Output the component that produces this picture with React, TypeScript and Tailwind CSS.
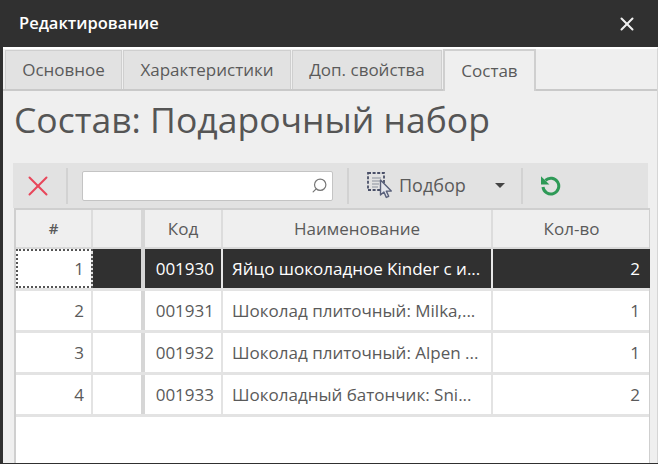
import { X, Search } from "lucide-react";

const rows = [
  { n: 1, code: "001930", name: "Яйцо шоколадное Kinder с и...", qty: 2 },
  { n: 2, code: "001931", name: "Шоколад плиточный: Milka,...", qty: 1 },
  { n: 3, code: "001932", name: "Шоколад плиточный: Alpen ...", qty: 1 },
  { n: 4, code: "001933", name: "Шоколадный батончик: Sni...", qty: 2 },
];

const cols = "grid grid-cols-[77px_48px_4px_78px_270px_157px]";

function PickIcon() {
  return (
    <svg width="26" height="27" viewBox="0 0 26 27" fill="none">
      <rect x="1" y="1" width="16" height="17" stroke="#4a5068" strokeWidth="1.8" strokeDasharray="3 1.6" />
      <path d="M5 6h9M5 9h9M5 12h7M5 15h6" stroke="#8a8f9c" strokeWidth="1.2" />
      <path d="M13.5 8v15l3.4-3 2.4 5.4 2.4-1.1-2.4-5.2h5z" fill="#e4e6ec" stroke="#59607a" strokeWidth="1.4" strokeLinejoin="round" />
    </svg>
  );
}

function RefreshIcon() {
  return (
    <svg width="21" height="21" viewBox="0 0 21 21" fill="none" className="ml-[17px]">
      <path d="M5.4 5.4A7.9 7.9 0 1 1 3 12" stroke="#2e9a57" strokeWidth="3" />
      <path d="M1 1.2v8.4h8.4z" fill="#2e9a57" />
    </svg>
  );
}

export default function App() {
  return (
    <div className="w-[658px] h-[464px] overflow-hidden bg-[#303030] pl-[3px] pb-px font-['Open_Sans',sans-serif] text-[#5a5a5a]">
      <div className="h-[47px] -ml-[3px] flex items-center justify-between pl-[19px] pr-[20px] text-white">
        <span className="text-[16.5px] font-semibold">Редактирование</span>
        <X size={22} strokeWidth={2.2} className="text-[#f0f0f0]" />
      </div>
      <div className="h-[416px] bg-[#efefef] flex flex-col border-t-[2px] border-r border-t-white border-r-[#d5d5d5]">
        <div className="h-[42px] flex items-end pl-[2px] gap-px border-b-[2px] border-[#c9c9c9] text-[17px]">
          <div className="w-[117px] h-[39px] bg-[#e2e2e2] border border-b-0 border-[#cfcfcf] flex items-center justify-center">Основное</div>
          <div className="w-[168px] h-[39px] bg-[#e2e2e2] border border-b-0 border-[#cfcfcf] flex items-center justify-center">Характеристики</div>
          <div className="w-[150px] h-[39px] bg-[#e2e2e2] border border-b-0 border-[#cfcfcf] flex items-center justify-center">Доп. свойства</div>
          <div className="w-[93px] h-[42px] -mb-[2px] bg-[#efefef] border-2 border-b-0 border-[#cfcfcf] flex items-center justify-center">Состав</div>
        </div>
        <h1 className="h-[72px] pl-[11px] pt-[4px] text-[35.5px] leading-[48px] text-[#555]">Состав: Подарочный набор</h1>
        <div className="ml-[10px] w-[635px] h-[45px] shrink-0 bg-[#e2e2e2] flex items-center">
          <div className="w-[55px] h-[36px] pr-[3px] flex items-center justify-center border-r-2 border-[#d2d2d2]">
            <X size={34} strokeWidth={1.4} className="shrink-0 text-[#e8465a]" />
          </div>
          <div className="ml-[14px] w-[251px] h-[30px] bg-white border border-[#c4c4c4] rounded-[2px] flex items-center justify-end pr-[4px]">
            <Search size={17} strokeWidth={1.7} className="text-[#777] -scale-x-100" />
          </div>
          <div className="ml-[14px] w-[2px] h-[36px] bg-[#d2d2d2]" />
          <div className="ml-[18px] flex items-center gap-[6px] text-[18px]">
            <PickIcon />
            <span>Подбор</span>
          </div>
          <div className="ml-[29px] w-0 h-0 border-x-[5px] border-x-transparent border-t-[5px] border-t-[#444]" />
          <div className="ml-[16px] w-[2px] h-[36px] bg-[#d2d2d2]" />
          <RefreshIcon />
        </div>
        <div className="ml-[11px] w-[636px] flex-1 bg-white border-l-[2px] border-r border-t-[2px] border-[#cfcfcf] text-[17px]">
          <div className={`${cols} h-[39px] bg-[#efefef] text-center leading-[37px] border-b-2 border-[#d9d9d9]`}>
            <div className="border-r-2 border-[#dcdcdc] font-semibold text-[15px]">#</div>
            <div />
            <div className="bg-[#d6d6d6]" />
            <div className="border-r-2 border-[#dcdcdc]">Код</div>
            <div className="border-r-2 border-[#dcdcdc]">Наименование</div>
            <div>Кол-во</div>
          </div>
          {rows.map((r) => {
            const selected = r.n === 1;
            const rowCell = selected ? "bg-[#303030] text-white border-[#e8e8e8]" : "border-[#e3e3e3]";
            return (
              <div key={r.n} className={`${cols} h-[42px] leading-[39px] border-b-[3px] border-[#e3e3e3]`}>
                <div className={`text-right pr-[7px] border-r-2 border-[#e3e3e3] ${selected ? "outline-dotted outline-2 -outline-offset-2 outline-[#555]" : ""}`}>{r.n}</div>
                <div className={selected ? "bg-[#303030]" : ""} />
                <div className="bg-[#d6d6d6]" />
                <div className={`text-right pr-[7px] border-r-2 ${rowCell}`}>{r.code}</div>
                <div className={`pl-[9px] whitespace-nowrap overflow-hidden border-r-2 ${rowCell}`}>{r.name}</div>
                <div className={`text-right pr-[10px] ${rowCell}`}>{r.qty}</div>
              </div>
            );
          })}
        </div>
      </div>
    </div>
  );
}
